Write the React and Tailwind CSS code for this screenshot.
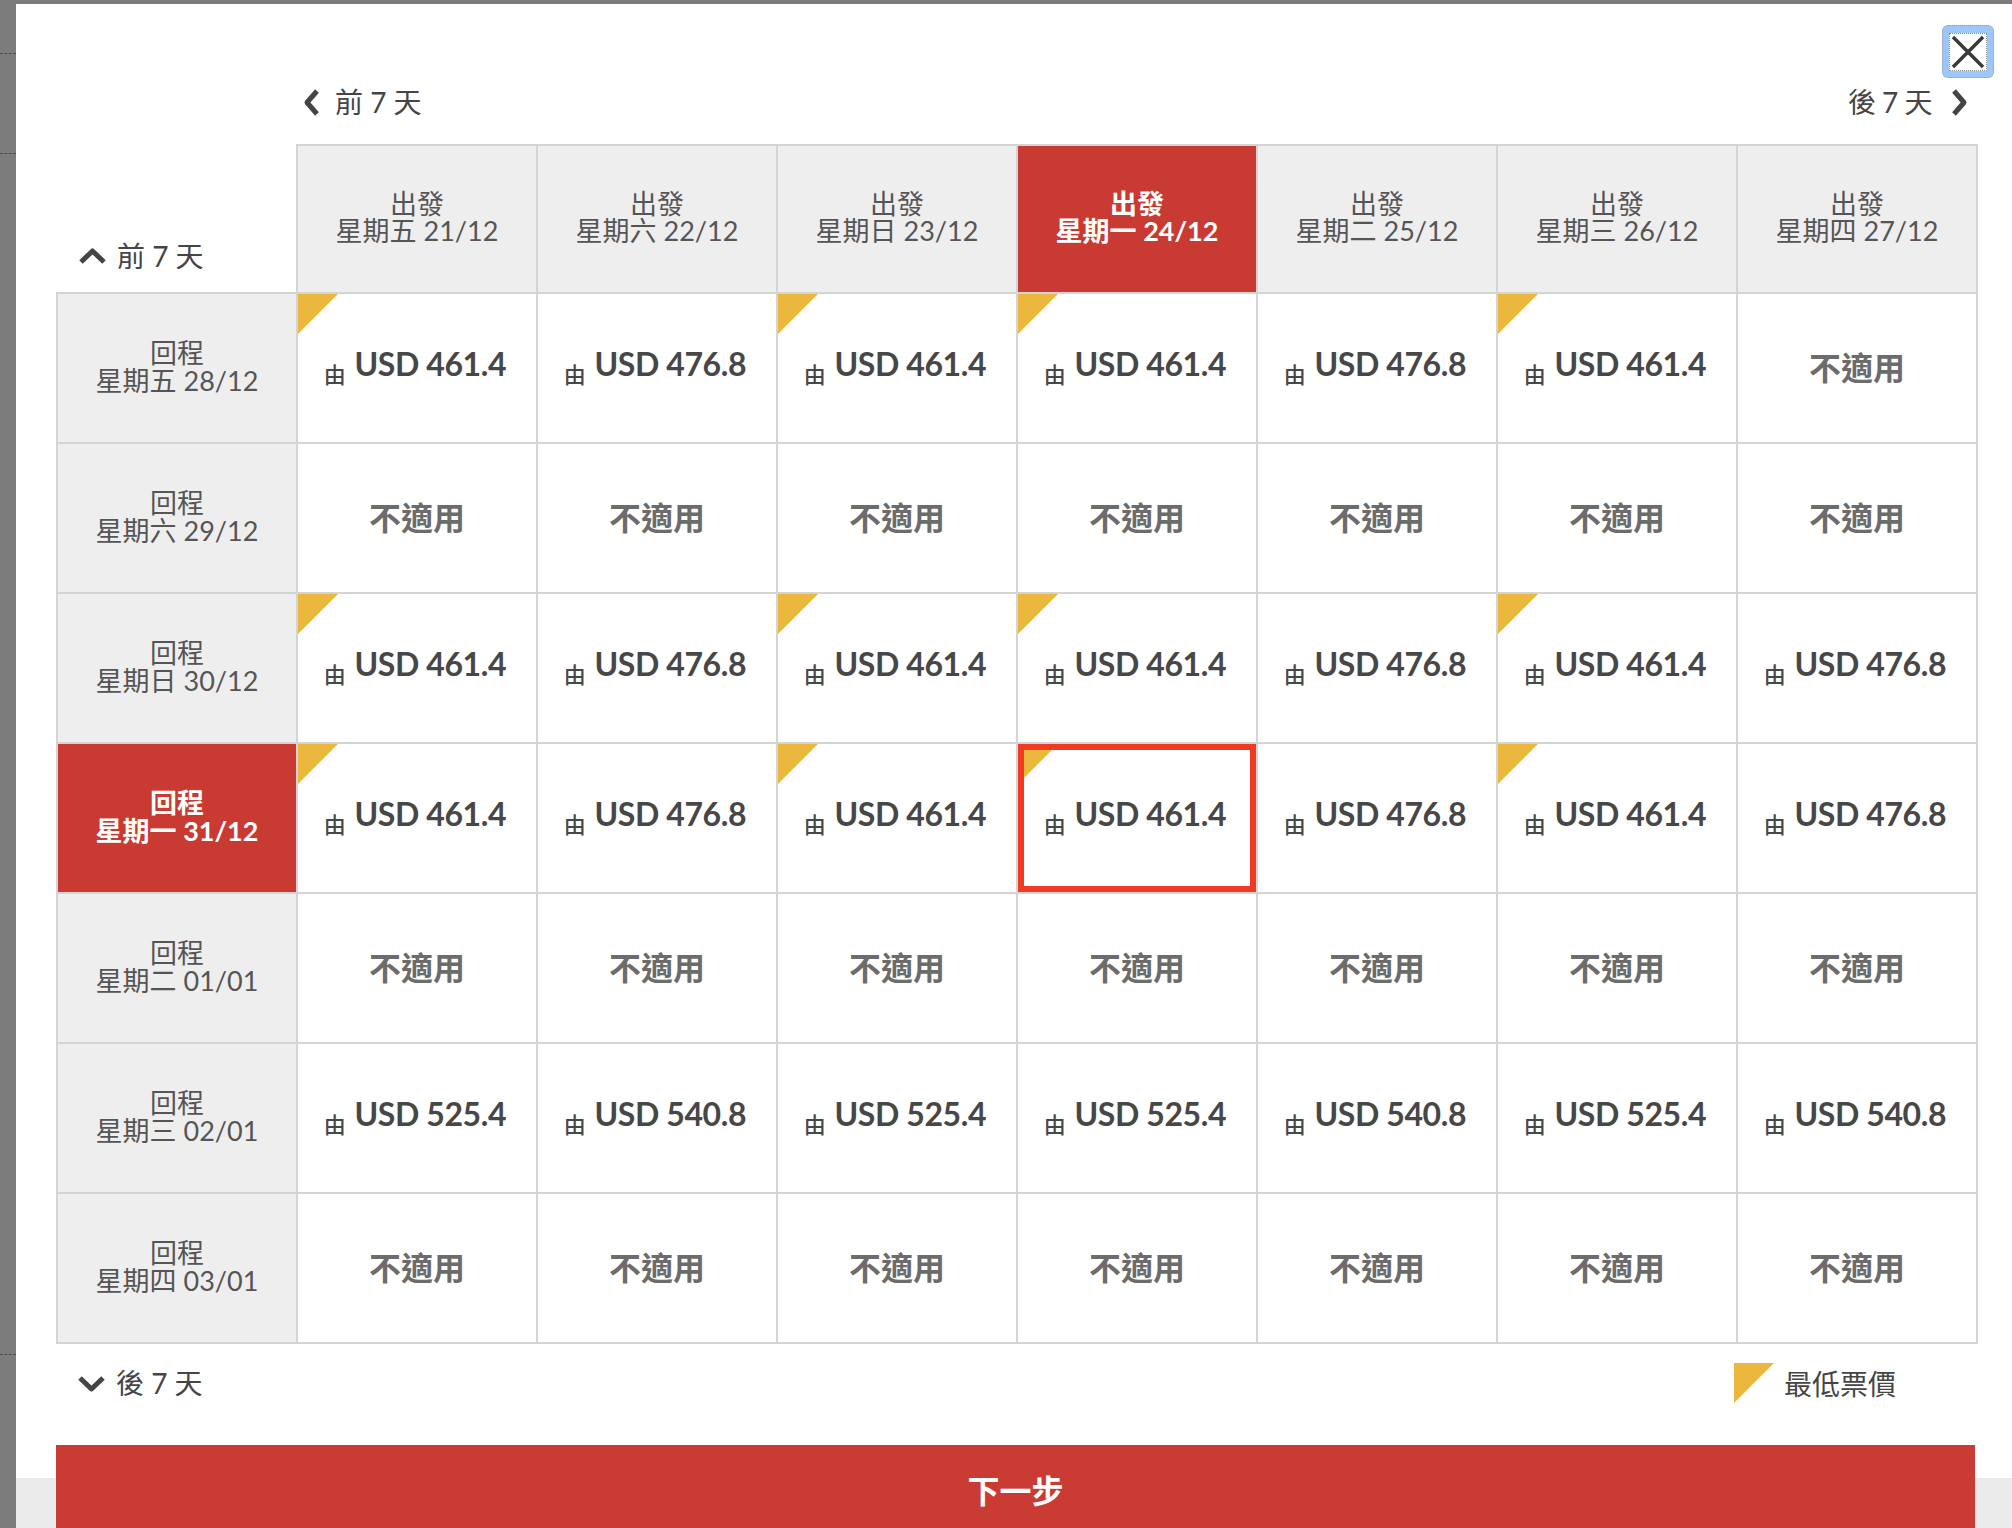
import React from "react";

const departs = [
  ["星期五", "21/12"],
  ["星期六", "22/12"],
  ["星期日", "23/12"],
  ["星期一", "24/12"],
  ["星期二", "25/12"],
  ["星期三", "26/12"],
  ["星期四", "27/12"],
];

const lowRow = [
  { p: "461.4", low: true },
  { p: "476.8" },
  { p: "461.4", low: true },
  { p: "461.4", low: true },
  { p: "476.8" },
  { p: "461.4", low: true },
  { p: "476.8" },
];
const na = [null, null, null, null, null, null, null];

const returns = [
  { day: "星期五", date: "28/12", cells: [...lowRow.slice(0, 6), null] },
  { day: "星期六", date: "29/12", cells: na },
  { day: "星期日", date: "30/12", cells: lowRow },
  { day: "星期一", date: "31/12", cells: lowRow },
  { day: "星期二", date: "01/01", cells: na },
  {
    day: "星期三",
    date: "02/01",
    cells: ["525.4", "540.8", "525.4", "525.4", "540.8", "525.4", "540.8"].map((p) => ({ p })),
  },
  { day: "星期四", date: "03/01", cells: na },
];

const selectedCol = 3;
const selectedRow = 3;

function Chevron({ dir }) {
  const pts = {
    left: "15,3 5,14.5 15,26",
    right: "5,3 15,14.5 5,26",
    up: "3,16 14.5,5 26,16",
    down: "3,5 14.5,16 26,5",
  }[dir];
  const horiz = dir === "left" || dir === "right";
  return (
    <svg
      width={horiz ? 20 : 29}
      height={horiz ? 29 : 21}
      viewBox={horiz ? "0 0 20 29" : "0 0 29 21"}
      className="shrink-0"
    >
      <polyline points={pts} fill="none" stroke="#444" strokeWidth="5" strokeLinejoin="round" />
    </svg>
  );
}

function Corner() {
  return (
    <svg width="40" height="40" viewBox="0 0 40 40" className="absolute left-0 top-0">
      <polygon points="0,0 40,0 0,40" fill="#ebb83d" />
    </svg>
  );
}

function PriceCell({ cell, selected }) {
  return (
    <td className="relative h-[150px] border-2 border-[#d4d4d4] bg-white p-0 text-center">
      {cell?.low && <Corner />}
      {cell ? (
        <div className="pr-[4px] pt-[3px] text-[32px] font-bold leading-[38px] tracking-[-0.4px] text-[#474747]">
          <span className="mr-[9px] align-sub text-[22px] font-medium">由</span>
          USD {cell.p}
        </div>
      ) : (
        <div className="text-[32px] font-bold leading-[38px] text-[#6c6c6c]">不適用</div>
      )}
      {selected && <div className="absolute inset-0 border-[6px] border-[#ef3b24]" />}
    </td>
  );
}

export default function App() {
  return (
    <div className="flex h-[1528px] w-[2012px] overflow-hidden bg-[#7c7c7c] font-['Lato','Noto_Sans_CJK_TC',sans-serif]">
      <div className="w-[16px] shrink-0 pt-[53px]">
        <div className="border-t border-dashed border-[#4d4d4d]" />
        <div className="mt-[99px] border-t border-dashed border-[#4d4d4d]" />
        <div className="mt-[1200px] border-t border-dashed border-[#4d4d4d]" />
      </div>

      <div className="flex-1 pt-[4px]">
        <div className="relative h-[1524px] bg-[linear-gradient(to_bottom,#ffffff_1474px,#ebebeb_1474px)] pt-[78px]">
          <button className="absolute right-[18px] top-[21px] flex h-[53px] w-[52px] items-center justify-center rounded-[6px] border border-dotted border-[#9a9a9a] bg-[#9cc7fa]">
            <span className="flex h-[38px] w-[38px] items-center justify-center border border-dotted border-[#8a8a8a] bg-white">
              <svg width="34" height="34" viewBox="0 0 34 34">
                <path d="M2 2 L32 32 M32 2 L2 32" stroke="#3b3b3b" strokeWidth="3.5" />
              </svg>
            </span>
          </button>

          <div className="ml-[40px] flex h-[40px] w-[1919px] items-center justify-between pl-[246px] pr-[6px] text-[28px] text-[#454545]">
            <button className="flex items-center gap-[13px]">
              <Chevron dir="left" />
              前 7 天
            </button>
            <button className="flex items-center gap-[17px] tracking-[-0.5px]">
              後 7 天
              <Chevron dir="right" />
            </button>
          </div>

          <table className="ml-[40px] mt-[22px] w-[1919px] table-fixed border-collapse">
            <thead>
              <tr className="h-[148px]">
                <th className="w-[240px] p-0 pb-[15px] pl-[21px] text-left align-bottom font-normal">
                  <button className="flex items-center gap-[10px] text-[28px] text-[#454545]">
                    <Chevron dir="up" />
                    前 7 天
                  </button>
                </th>
                {departs.map(([day, date], i) => (
                  <th
                    key={date}
                    className={
                      i === selectedCol
                        ? "w-[240px] border-2 border-[#d4d4d4] bg-[#c93a33] p-0 pb-[4px] text-[27px] font-bold leading-[27px] text-white"
                        : "w-[240px] border-2 border-[#d4d4d4] bg-[#eeeeee] p-0 pb-[4px] text-[27px] font-normal leading-[27px] text-[#555]"
                    }
                  >
                    <div>出發</div>
                    <div>
                      {day} {date}
                    </div>
                  </th>
                ))}
              </tr>
            </thead>
            <tbody>
              {returns.map((row, r) => (
                <tr key={row.date}>
                  <td
                    className={
                      r === selectedRow
                        ? "h-[150px] border-2 border-[#d4d4d4] bg-[#c93a33] p-0 pb-[2px] text-center text-[27px] font-bold leading-[28px] text-white"
                        : "h-[150px] border-2 border-[#d4d4d4] bg-[#eeeeee] p-0 pb-[2px] text-center text-[27px] leading-[28px] text-[#555]"
                    }
                  >
                    <div>回程</div>
                    <div>
                      {row.day} {row.date}
                    </div>
                  </td>
                  {row.cells.map((cell, c) => (
                    <PriceCell key={c} cell={cell} selected={r === selectedRow && c === selectedCol} />
                  ))}
                </tr>
              ))}
            </tbody>
          </table>

          <div className="ml-[40px] mt-[9px] flex h-[60px] w-[1919px] items-center justify-between pl-[21px] pr-[79px] text-[28px] text-[#454545]">
            <button className="flex items-center gap-[10px]">
              <Chevron dir="down" />
              後 7 天
            </button>
            <div className="flex items-center gap-[10px]">
              <svg width="40" height="40" viewBox="0 0 40 40">
                <polygon points="0,0 40,0 0,40" fill="#ebb83d" />
              </svg>
              <span className="translate-y-[1px]">最低票價</span>
            </div>
          </div>

          <button className="ml-[40px] mt-[32px] flex h-[92px] w-[1919px] items-center justify-center bg-[#ca3b34] text-[32px] font-bold text-white">
            下一步
          </button>
        </div>
      </div>
    </div>
  );
}
